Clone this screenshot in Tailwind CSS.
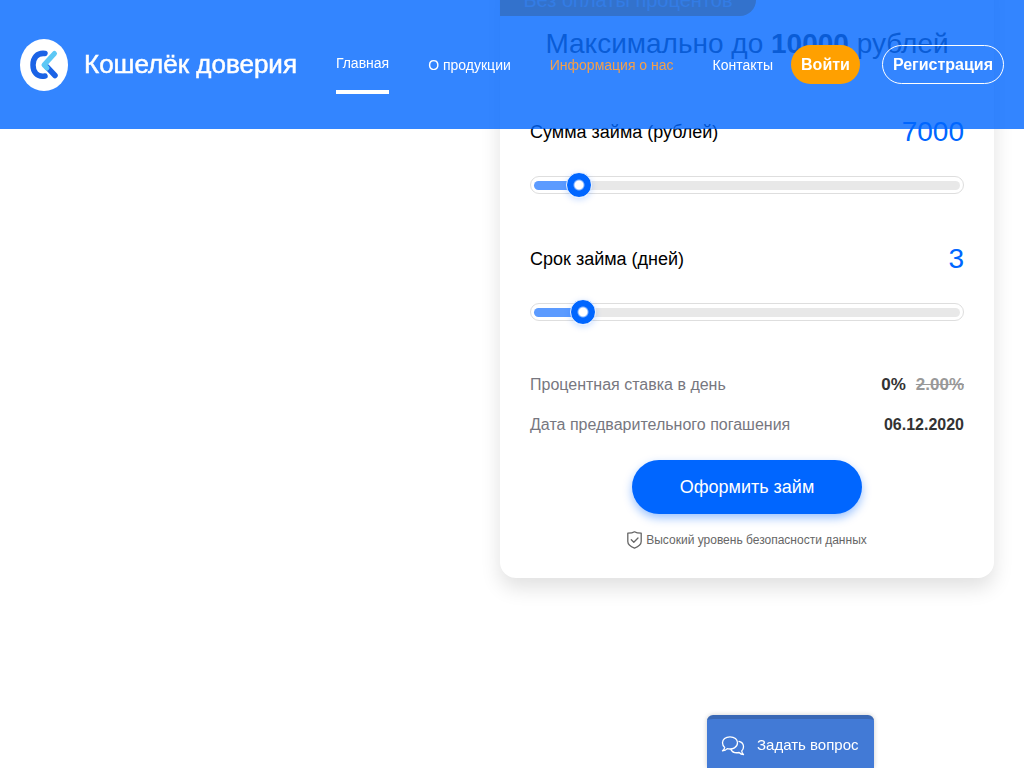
<!DOCTYPE html>
<html lang="ru">
<head>
    <meta charset="UTF-8">
    <meta name="viewport" content="width=device-width, initial-scale=1.0">
    <title>Кошелёк доверия</title>
    <script src="https://cdn.jsdelivr.net/npm/@tailwindcss/browser@4"></script>
</head>
<body class="min-h-screen bg-white font-['Liberation_Sans',Arial,sans-serif] text-black">
    <!-- Шапка -->
    <header class="fixed inset-x-0 top-0 z-10 flex h-[129px] items-center bg-[#0066ff]/80 px-5 text-white">
        <a href="#" class="flex items-center gap-4">
            <svg class="h-[52px] w-12" viewBox="0 0 48 52" fill="none" stroke-linecap="round" stroke-linejoin="round" aria-hidden="true">
                <ellipse cx="24" cy="26" rx="24" ry="26" fill="#fff"/>
                <path d="M25 14.500C17 13.500 13 19 13 26S17 38.500 25 37" stroke="#1b63e6" stroke-width="5.500"/>
                <path d="M27 28 35 36.500" stroke="#1b63e6" stroke-width="5.500"/>
                <path d="M34.500 14.500 24 26 27 29" stroke="#5cc8f5" stroke-width="5"/>
            </svg>
            <span class="text-[26px] whitespace-nowrap [-webkit-text-stroke:0.5px_white]">Кошелёк доверия</span>
        </a>
        <nav class="ml-auto flex items-center gap-[39px] text-sm whitespace-nowrap">
            <a href="#" class="border-b-4 border-white pt-[18px] pb-[17px]">Главная</a>
            <a href="#">О продукции</a>
            <a href="#" class="text-[#f5a04a]">Информация о нас</a>
            <a href="#">Контакты</a>
        </nav>
        <div class="ml-[18px] flex gap-[22px] text-base font-bold whitespace-nowrap">
            <button class="h-[39px] rounded-full bg-[#ffa000] px-[10px]">Войти</button>
            <button class="h-[39px] rounded-full border border-white px-[10px]">Регистрация</button>
        </div>
    </header>

    <main class="flex justify-end pr-[30px]">
        <!-- Калькулятор займа -->
        <form class="-mt-8 w-[494px] rounded-2xl bg-white pb-7 shadow-[0_10px_20px_rgba(0,0,0,0.12)]">
            <div class="flex h-12 w-64 items-center justify-center rounded-br-2xl bg-[#ffa000] pt-4 text-xl text-white/50">Без оплаты процентов</div>
            <h2 class="mt-2 text-center text-[28px] leading-10 text-[#333]">Максимально до <b>10000</b> рублей</h2>

            <div class="px-[30px] pt-12">
                <div class="flex h-10 items-center justify-between">
                    <label for="amount" class="text-lg">Сумма займа (рублей)</label>
                    <output id="amountValue" for="amount" class="text-[28px] text-[#0066ff]">7000</output>
                </div>
                <div class="mt-6 flex h-[18px] items-center rounded-full border border-[#dedede] px-[3px]">
                    <input id="amount" type="range" min="5000" max="30000" step="1000" value="7000" style="--fill: 8%"
                        class="h-[9px] w-full appearance-none rounded-full bg-[linear-gradient(to_right,#5c9bff_var(--fill),#e8e8e8_var(--fill))] [&::-webkit-slider-thumb]:size-[26px] [&::-webkit-slider-thumb]:appearance-none [&::-webkit-slider-thumb]:rounded-full [&::-webkit-slider-thumb]:border [&::-webkit-slider-thumb]:border-[#e6f0ff] [&::-webkit-slider-thumb]:bg-[radial-gradient(circle,white_4px,#0066ff_6px)] [&::-webkit-slider-thumb]:shadow-[0_2px_6px_rgba(0,102,255,0.2)]">
                </div>

                <div class="mt-[45px] flex h-10 items-center justify-between">
                    <label for="days" class="text-lg">Срок займа (дней)</label>
                    <output id="daysValue" for="days" class="text-[28px] text-[#0066ff]">3</output>
                </div>
                <div class="mt-6 flex h-[18px] items-center rounded-full border border-[#dedede] px-[3px]">
                    <input id="days" type="range" min="1" max="23" value="3" style="--fill: 9%"
                        class="h-[9px] w-full appearance-none rounded-full bg-[linear-gradient(to_right,#5c9bff_var(--fill),#e8e8e8_var(--fill))] [&::-webkit-slider-thumb]:size-[26px] [&::-webkit-slider-thumb]:appearance-none [&::-webkit-slider-thumb]:rounded-full [&::-webkit-slider-thumb]:border [&::-webkit-slider-thumb]:border-[#e6f0ff] [&::-webkit-slider-thumb]:bg-[radial-gradient(circle,white_4px,#0066ff_6px)] [&::-webkit-slider-thumb]:shadow-[0_2px_6px_rgba(0,102,255,0.2)]">
                </div>

                <dl class="mt-11 text-base text-[#77777f]">
                    <div class="flex h-10 items-center justify-between">
                        <dt>Процентная ставка в день</dt>
                        <dd class="flex gap-[10px] text-[17px] font-bold text-[#333]">0% <s class="text-[#999]">2.00%</s></dd>
                    </div>
                    <div class="flex h-10 items-center justify-between">
                        <dt>Дата предварительного погашения</dt>
                        <dd class="font-bold text-[#333]">06.12.2020</dd>
                    </div>
                </dl>
            </div>

            <div class="mt-[15px] flex flex-col items-center">
                <button type="button" class="h-[54px] w-[230px] rounded-full bg-[#0066ff] text-lg text-white shadow-[0_4px_10px_rgba(0,102,255,0.4)]">Оформить займ</button>
                <p class="mt-4 flex h-5 items-center gap-1 text-xs text-[#666]">
                    <svg class="h-[18px] w-[15px]" viewBox="0 0 15 18" fill="none" stroke="currentColor" stroke-width="1.300" stroke-linejoin="round" stroke-linecap="round" aria-hidden="true">
                        <path d="M7.500 .8C6 1.800 4 2.200.8 2.200V10.500C.8 13.500 3.200 15.500 7.500 17.200 11.800 15.500 14.200 13.500 14.200 10.500V2.200C11 2.200 9 1.800 7.500 .8Z"/>
                        <path d="M4.300 8.800 6.800 11.200 11 7"/>
                    </svg>
                    Высокий уровень безопасности данных
                </p>
            </div>
        </form>
    </main>

    <!-- Виджет чата -->
    <button class="fixed right-[150px] bottom-0 flex h-[53px] w-[167px] items-center gap-3 rounded-t-md border-t-4 border-[#3968b5] bg-[#427ad6] pt-1 pl-[14px] text-[15px] whitespace-nowrap text-white shadow-[0_0_5px_rgba(0,0,0,0.2)]">
        <svg class="h-5 w-6 shrink-0" viewBox="0 0 24 20" fill="none" stroke="currentColor" stroke-width="1.300" stroke-linejoin="round" stroke-linecap="round" aria-hidden="true">
            <path d="M9 .8C4.500 .8 1.500 3.400 1.500 6.800 1.500 8.700 2.400 10.300 3.700 11.400 3.500 12.800 2.700 14 1.500 14.800 3.500 14.800 5.200 14 6.300 12.700 11.800 13.900 16.500 11.300 16.500 6.800 16.500 3.400 13.500 .8 9 .8Z"/>
            <path d="M18 5.300C21 6 22.500 8.100 22.500 10.800 22.500 12.500 21.900 14 20.700 15 20.900 16.600 21.500 17.600 22.500 18.500 20.600 18.500 19.200 17.700 18.100 16.500 14.500 17.200 11.200 16 10 13.600"/>
        </svg>
        Задать вопрос
    </button>

    <script>
        function bindSlider(id) {
            const input = document.getElementById(id);
            const output = document.getElementById(id + "Value");
            input.addEventListener("input", () => {
                output.textContent = input.value;
                const percent = (input.value - input.min) / (input.max - input.min) * 100;
                input.style.setProperty("--fill", percent + "%");
            });
        }

        bindSlider("amount");
        bindSlider("days");
    </script>
</body>
</html>
